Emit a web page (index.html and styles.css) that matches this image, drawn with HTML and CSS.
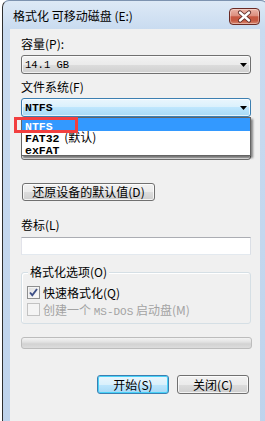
FILE: index.html
```html
<!DOCTYPE html>
<html lang="zh-CN">
<head>
<meta charset="utf-8">
<title>格式化 可移动磁盘 (E:)</title>
<link rel="stylesheet" href="styles.css">
</head>
<body>
<div class="window">
  <div class="titlebar">
    <span class="title">格式化 可移动磁盘 (E:)</span>
    <span class="close">
      <svg width="31" height="17" viewBox="0 0 31 17">
        <path d="M11 4.5 L20 12.5 M20 4.5 L11 12.5" stroke="#5a2a26" stroke-width="4.2" stroke-linecap="round" fill="none"/>
        <path d="M11 4.5 L20 12.5 M20 4.5 L11 12.5" stroke="#ffffff" stroke-width="2.4" stroke-linecap="round" fill="none"/>
      </svg>
    </span>
  </div>
  <div class="content">
    <div class="label l-first">容量(P):</div>
    <div class="combo">
      <span class="mono">14.1 GB</span>
      <svg class="arrow" width="7" height="4" viewBox="0 0 7 4"><polygon points="0,0 7,0 3.5,4" fill="#000"/></svg>
    </div>
    <div class="label">文件系统(F)</div>
    <div class="combo focus">
      <span class="mono bold">NTFS</span>
      <svg class="arrow" width="7" height="4" viewBox="0 0 7 4"><polygon points="0,0 7,0 3.5,4" fill="#000"/></svg>
      <ul class="dropdown">
        <li class="sel"><span class="mono bold">NTFS</span></li>
        <li><span class="mono bold">FAT32</span> <span class="cn">(默认)</span></li>
        <li><span class="mono bold">exFAT</span></li>
      </ul>
      <div class="annot"></div>
    </div>
    <div class="label"></div>
    <div class="combo">
      <svg class="arrow" width="7" height="4" viewBox="0 0 7 4"><polygon points="0,0 7,0 3.5,4" fill="#000"/></svg>
    </div>
    <div class="btn restore">还原设备的默认值(D)</div>
    <div class="label l-vol">卷标(L)</div>
    <div class="input"></div>
    <div class="group">
      <div class="group-title">格式化选项(O)</div>
      <div class="check c-first"><span class="box checked">
        <svg width="11" height="11" viewBox="0 0 11 11"><path d="M2 5.5 L4.3 8.2 L9 2" stroke="#3d4f86" stroke-width="1.9" fill="none"/></svg>
      </span><span>快速格式化(Q)</span></div>
      <div class="check disabled"><span class="box"></span><span>创建一个 <span class="mono ms">MS-DOS</span> 启动盘(M)</span></div>
    </div>
    <div class="progress"></div>
    <div class="buttons">
      <div class="btn default">开始(S)</div>
      <div class="btn">关闭(C)</div>
    </div>
  </div>
</div>
</body>
</html>
```

FILE: styles.css
```css
* { box-sizing: border-box; }
html, body { margin: 0; padding: 0; }
body {
  width: 265px;
  height: 421px;
  overflow: hidden;
  background: #ffffff;
  font-family: "Noto Sans CJK SC", "Noto Sans", sans-serif;
  font-size: 12px;
  color: #000;
}
.window {
  margin-left: 2px;
  width: 266px;
  height: 440px;
  border: 1px solid #2e2e2e;
  border-top-color: #7d93b0;
  border-radius: 7px 7px 0 0;
  background: linear-gradient(#dde9f6 0, #c9dbf0 28px, #bed3ec 100%);
  padding: 0 7px;
  display: flex;
  flex-direction: column;
}
.titlebar {
  height: 28px;
  display: flex;
  justify-content: space-between;
  align-items: flex-start;
  flex: none;
}
.title {
  padding-top: 7px;
  padding-left: 3px;
  line-height: 16px;
  font-size: 12px;
  white-space: nowrap;
}
.close {
  margin-top: 7px;
  width: 31px;
  height: 17px;
  border: 1px solid #6a2a24;
  border-radius: 4px;
  background: linear-gradient(#ecb5a8 0%, #dc8e7e 45%, #c75741 52%, #c55a43 78%, #da8b73 100%);
  box-shadow: inset 0 0 0 1px rgba(255, 255, 255, 0.35);
  display: flex;
  align-items: center;
  justify-content: center;
}
.close svg { display: block; margin: -1px; }
.content {
  flex: 1;
  background: #f0f0f0;
  padding: 0 9px 0 11px;
}
.label {
  height: 16px;
  line-height: 16px;
  margin-top: 5px;
  white-space: nowrap;
}
.l-first { margin-top: 7px; }
.l-vol { margin-top: 16px; }
.mono { font-family: "Liberation Mono", "Noto Sans CJK SC", monospace; font-size: 10.5px; }
.bold { font-weight: bold; font-size: 11.5px; }
.cn { margin-left: 2px; }
.combo {
  position: relative;
  margin-top: 3px;
  height: 19px;
  border: 1px solid #707070;
  border-radius: 3px;
  background: linear-gradient(#f2f2f2 0%, #ebebeb 50%, #dddddd 50%, #cfcfcf 100%);
  box-shadow: inset 0 0 0 1px rgba(255, 255, 255, 0.7);
  display: flex;
  align-items: center;
  padding-left: 3px;
  white-space: nowrap;
}
.combo.focus {
  border-color: #3c7fb1;
  background: linear-gradient(#eaf6fd 0%, #d9f0fc 50%, #bee6fd 50%, #a7d9f5 100%);
}
.arrow { margin-left: auto; margin-right: 3px; display: block; }
.dropdown {
  position: absolute;
  left: -1px;
  top: 18px;
  width: 230px;
  margin: 0;
  padding: 0;
  list-style: none;
  background: #fff;
  border: 1px solid #646464;
  box-shadow: 2px 2px 2px rgba(0, 0, 0, 0.45);
  z-index: 5;
}
.dropdown li {
  height: 12px;
  line-height: 12px;
  padding-left: 3px;
  white-space: nowrap;
}
.dropdown li.sel { background: #3399ff; color: #fff; height: 13px; line-height: 13px; }
.annot {
  position: absolute;
  left: -8px;
  top: 18px;
  width: 64px;
  height: 16px;
  border: 3px solid #f23f3f;
  z-index: 6;
}
.btn {
  height: 19px;
  border: 1px solid #707070;
  border-radius: 3px;
  background: linear-gradient(#f2f2f2 0%, #ebebeb 50%, #dddddd 50%, #cfcfcf 100%);
  box-shadow: inset 0 0 0 1px rgba(255, 255, 255, 0.75);
  display: flex;
  align-items: center;
  justify-content: center;
  line-height: 16px;
  white-space: nowrap;
}
.restore {
  margin-top: 23px;
  margin-left: 1px;
  width: 133px;
  height: 18px;
}
.input {
  margin-top: 4px;
  height: 18px;
  background: #fff;
  border: 1px solid #e3e9ef;
  border-top-color: #abadb3;
  border-left-color: #e2e3ea;
  border-right-color: #dbdfe6;
}
.group {
  margin-top: 17px;
  height: 52px;
  border: 1px solid #d5dfe5;
  border-radius: 3px;
  box-shadow: inset 1px 1px 0 #fff;
  padding-left: 5px;
}
.group-title {
  margin-top: -9px;
  margin-left: 1px;
  padding: 0 2px;
  width: fit-content;
  height: 16px;
  line-height: 16px;
  background: #f0f0f0;
  white-space: nowrap;
}
.check {
  height: 16px;
  margin-top: 1px;
  display: flex;
  align-items: center;
  white-space: nowrap;
}
.c-first { margin-top: 4px; }
.box {
  width: 13px;
  height: 13px;
  margin-right: 3px;
  border: 1px solid #8e8f8f;
  background: linear-gradient(135deg, #dcdcdc, #ffffff);
  box-shadow: inset 0 0 0 1px #f4f4f4;
  display: flex;
  align-items: center;
  justify-content: center;
  flex: none;
}
.box svg { display: block; }
.disabled { color: #a3a3a3; }
.disabled .box { border-color: #c2c2c2; background: #f4f4f4; box-shadow: none; }
.ms { font-size: 11px; }
.progress {
  margin-top: 13px;
  height: 12px;
  width: 231px;
  border: 1px solid #bcbcbc;
  border-radius: 3px;
  background: linear-gradient(#f3f3f3 0%, #e2e2e2 40%, #d2d2d2 60%, #dcdcdc 100%);
}
.buttons {
  margin-top: 26px;
  display: flex;
  justify-content: flex-end;
  gap: 8px;
  padding-right: 2px;
}
.buttons .btn { width: 72px; }
.btn.default {
  border-color: #3c7fb1;
  background: linear-gradient(#eaf6fd 0%, #d9f0fc 50%, #bee6fd 50%, #a7d9f5 100%);
  box-shadow: inset 0 0 0 1px #48d2f8;
}
```
